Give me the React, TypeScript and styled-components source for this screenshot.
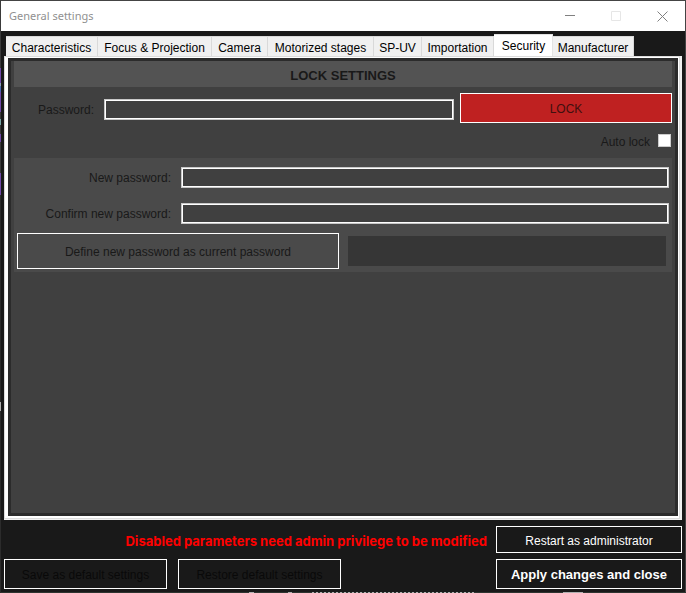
import React, { useState } from "react";
import styled, { createGlobalStyle, css } from "styled-components";

const GlobalStyle = createGlobalStyle`
  *, *::before, *::after { box-sizing: border-box; }
  html, body { margin: 0; background: #191919; }
  button, input { font: inherit; margin: 0; }
`;

/* The desktop shows as a thin rim around the window. */
const Desktop = styled.div`
  display: flex;
  min-height: 100vh;
  padding: 1px;
  background:
    linear-gradient(#3a3a3a 68px, #7048a8 68px 83px, #8fa0b8 83px 86px, #4a68b0 86px 92px,
      #7048a8 92px 112px, #3a3a3a 112px 119px, #78a8a8 119px 125px, #3a3a3a 125px 134px,
      #7048a8 134px 142px, #3a3a3a 142px 173px, #7048a8 173px 195px, #2b2b2b 195px 402px,
      #b0b0b0 402px 411px, #2b2b2b 411px) left / 1px 100% no-repeat,
    linear-gradient(90deg, #2e3430 249px, #b0b0b0 249px 254px, #2e3430 254px 288px,
      #b0b0b0 288px 292px, #2e3430 292px 310px, transparent 310px 474px, #2e3430 474px 563px,
      #b0b0b0 563px 583px, #2e3430 583px) bottom / 100% 1px no-repeat,
    repeating-linear-gradient(90deg, #b0b0b0 0 2px, #2e3430 2px 4px) bottom / 100% 1px no-repeat,
    #444444;
  font: 12px/16px "Liberation Sans", Arial, sans-serif;
  color: #191919;
`;

const Window = styled.main`
  flex: 1;
  display: flex;
  flex-direction: column;
  min-width: 0;
  background: #191919;
`;

const TitleBar = styled.header`
  display: flex;
  align-items: center;
  justify-content: space-between;
  height: 30px;
  padding-left: 8px;
  background: #ffffff;
`;

const Title = styled.h1`
  margin: 0;
  font: 11px/16px "Noto Sans", "Open Sans", sans-serif;
  color: #909090;
`;

const Caption = styled.div`
  display: flex;
`;

const CaptionButton = styled.button`
  display: flex;
  align-items: center;
  justify-content: center;
  width: 46px;
  height: 30px;
  padding: 0;
  border: 0;
  background: none;
  color: #808080;
  &:disabled { color: #e6e6e6; }
`;

const TabList = styled.div`
  display: flex;
  align-items: flex-end;
  height: 25px;
  padding-left: 5px;
`;

const Tab = styled.button<{ $width: number; $active: boolean }>`
  flex: 0 1 ${(p) => p.$width}px;
  height: 20px;
  padding: 3px 0 0;
  border: 1px solid #d9d9d9;
  border-width: 1px 1px 0 0;
  background: #f0f0f0;
  color: #000000;
  white-space: nowrap;
  ${(p) =>
    p.$active &&
    css`
      height: 22px;
      padding: 1px 0 0 1px;
      border-color: #e3e3e3;
      background: #ffffff;
    `}
`;

/* Bevelled frame of the tab control. */
const Frame = styled.div`
  flex: 1;
  display: flex;
  margin: 0 3px;
  border: solid #f0f0f0;
  border-width: 0 2px 1px 0;
`;

const FrameInner = styled.div`
  flex: 1;
  display: flex;
  padding: 1px 1px 2px 3px;
  border: 1px solid #dcdcdc;
  background: #ffffff;
`;

const Panel = styled.section`
  flex: 1;
  min-width: 0;
  padding: 0 3px;
  border: 3px solid #2b2b2b;
  background: #404040;
`;

const Heading = styled.h2`
  margin: 0;
  padding: 7px 0 3px;
  background: #535353;
  font-size: 13px;
  line-height: 16px;
  text-align: center;
`;

const Label = styled.label`
  text-align: right;
  white-space: nowrap;
`;

const LockRow = styled.div`
  display: grid;
  grid-template-columns: 80px minmax(0, 350fr) minmax(0, 212fr);
  align-items: center;
  padding-top: 6px;

  ${Label} { padding-top: 4px; }
`;

const FieldCell = styled.div`
  display: flex;
  padding: 2px 0 0 10px;
`;

const PasswordInput = styled.input`
  width: 100%;
  height: 21px;
  padding: 0 4px;
  border: 1px solid #c8c8c8;
  outline: 1px solid #ffffff;
  outline-offset: -2px;
  background: #404040;
  color: #ffffff;
`;

const Button = styled.button`
  min-width: 0;
  height: 30px;
  padding: 2px 0 0;
  border: 1px solid #ffffff;
  background: transparent;
  color: #191919;
  white-space: nowrap;
`;

const LockButton = styled(Button)`
  margin-left: 6px;
  background: #bf2121;
  color: #40100f;
`;

const AutoLock = styled.label`
  display: flex;
  align-items: center;
  justify-content: flex-end;
  gap: 8px;
  height: 35px;
  padding: 3px 1px 0 0;
`;

const CheckBox = styled.input`
  appearance: none;
  width: 13px;
  height: 13px;
  margin-bottom: 3px;
  border: 1px solid #cccccc;
  background: #ffffff;
  &:checked { background: #191919; outline: 3px solid #ffffff; outline-offset: -4px; }
`;

const ChangeForm = styled.form`
  padding: 9px 3px 3px;
  background: #4a4a4a;
`;

const FieldRow = styled.div`
  display: grid;
  grid-template-columns: 154px minmax(0, 1fr);
  column-gap: 10px;
  align-items: center;
  margin-bottom: 15px;
`;

const DefineRow = styled.div`
  display: grid;
  grid-template-columns: 322fr 318fr;
  column-gap: 9px;
  align-items: center;
  margin: -6px 3px 0 0;
`;

const DefineButton = styled(Button)`
  height: 36px;
`;

const Status = styled.output`
  height: 30px;
  background: #363636;
`;

const Footer = styled.footer`
  display: grid;
  grid-template-columns: 163px 163px minmax(0, 1fr) 186px;
  gap: 6px 0;
  padding: 6px 3px 3px;
`;

const Warning = styled.p`
  grid-column: 1 / 4;
  margin: 0;
  padding: 7px 9px 0 0;
  font-family: Inter, "Liberation Sans", sans-serif;
  font-size: 13px;
  font-weight: bold;
  text-align: right;
  color: #ff0000;
`;

const DisabledButton = styled(Button)`
  &:disabled { color: #090909; }
`;

const RestoreButton = styled(DisabledButton)`
  grid-column: 2;
  width: 163px;
  margin-left: 11px;
`;

const RestartButton = styled(Button)`
  grid-column: 4;
  height: 27px;
  color: #ffffff;
`;

const ApplyButton = styled(Button)`
  grid-column: 4;
  font-size: 13px;
  font-weight: bold;
  color: #ffffff;
`;

const tabs = [
  { name: "Characteristics", width: 92 },
  { name: "Focus & Projection", width: 114 },
  { name: "Camera", width: 56 },
  { name: "Motorized stages", width: 106 },
  { name: "SP-UV", width: 48 },
  { name: "Importation", width: 72 },
  { name: "Security", width: 59 },
  { name: "Manufacturer", width: 81 },
];

export default function App() {
  const [active, setActive] = useState("Security");
  return (
    <>
      <GlobalStyle />
      <Desktop>
        <Window>
          <TitleBar>
            <Title>General settings</Title>
            <Caption>
              <CaptionButton aria-label="Minimize">
                <svg width="10" height="10" stroke="currentColor"><path d="M0 4.5h10" /></svg>
              </CaptionButton>
              <CaptionButton aria-label="Maximize" disabled>
                <svg width="10" height="10" fill="none" stroke="currentColor"><path d="M.5.5h9v9h-9z" /></svg>
              </CaptionButton>
              <CaptionButton aria-label="Close">
                <svg width="11" height="11" stroke="currentColor"><path d="M.5.5l10 10M10.5.5l-10 10" /></svg>
              </CaptionButton>
            </Caption>
          </TitleBar>
          <TabList role="tablist">
            {tabs.map((t) => (
              <Tab
                key={t.name}
                role="tab"
                aria-selected={t.name === active}
                $width={t.width}
                $active={t.name === active}
                onClick={() => setActive(t.name)}
              >
                {t.name}
              </Tab>
            ))}
          </TabList>
          <Frame>
            <FrameInner>
              <Panel role="tabpanel">
                <Heading>LOCK SETTINGS</Heading>
                <LockRow>
                  <Label htmlFor="password">Password:</Label>
                  <FieldCell><PasswordInput id="password" type="password" /></FieldCell>
                  <LockButton type="button">LOCK</LockButton>
                </LockRow>
                <AutoLock>
                  Auto lock
                  <CheckBox type="checkbox" />
                </AutoLock>
                <ChangeForm onSubmit={(e) => e.preventDefault()}>
                  <FieldRow>
                    <Label htmlFor="new-password">New password:</Label>
                    <PasswordInput id="new-password" type="password" />
                  </FieldRow>
                  <FieldRow>
                    <Label htmlFor="confirm-password">Confirm new password:</Label>
                    <PasswordInput id="confirm-password" type="password" />
                  </FieldRow>
                  <DefineRow>
                    <DefineButton>Define new password as current password</DefineButton>
                    <Status />
                  </DefineRow>
                </ChangeForm>
              </Panel>
            </FrameInner>
          </Frame>
          <Footer>
            <Warning>Disabled parameters need admin privilege to be modified</Warning>
            <RestartButton>Restart as administrator</RestartButton>
            <DisabledButton disabled>Save as default settings</DisabledButton>
            <RestoreButton disabled>Restore default settings</RestoreButton>
            <ApplyButton>Apply changes and close</ApplyButton>
          </Footer>
        </Window>
      </Desktop>
    </>
  );
}
